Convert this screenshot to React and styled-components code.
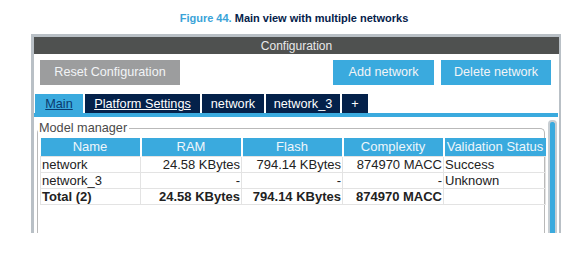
import styled, { createGlobalStyle } from "styled-components";

const GlobalStyle = createGlobalStyle`
  html, body {
    margin: 0;
    padding: 0;
    background: #ffffff;
  }
  body {
    font-family: "Liberation Sans", Arial, sans-serif;
  }
`;

const Page = styled.div`
  width: 588px;
  height: 274px;
  padding-top: 11px;
  box-sizing: border-box;
  overflow: hidden;
`;

const Caption = styled.div`
  text-align: center;
  font-size: 11px;
  font-weight: 700;
  line-height: 14px;
  color: #04214a;
  margin-bottom: 9px;

  span {
    color: #3aa3d8;
  }
`;

const Frame = styled.div`
  margin-left: 31px;
  width: 530px;
  height: 199px;
  box-sizing: border-box;
  border: 3px solid #b9c0c6;
  border-right-width: 2px;
  border-bottom: none;
  display: flex;
  flex-direction: column;
`;

const Header = styled.div`
  height: 17px;
  background: #4f5150;
  color: #e9e9e9;
  font-size: 12px;
  line-height: 18px;
  text-align: center;
`;

const Body = styled.div`
  flex: 1;
  display: flex;
  flex-direction: column;
  padding-top: 6px;
  min-height: 0;
`;

const ButtonRow = styled.div`
  display: flex;
  gap: 7px;
  padding: 0 8px 0 6px;
`;

const Button = styled.div`
  height: 25px;
  width: ${({ w }) => w}px;
  margin-left: ${({ push }) => (push ? "auto" : "0")};
  background: ${({ variant }) => (variant === "grey" ? "#9c9d9e" : "#3aaade")};
  color: #f2f4f6;
  font-size: 12.6px;
  line-height: 25px;
  text-align: center;
`;

const Tabs = styled.div`
  display: flex;
  gap: 2px;
  margin-top: 9px;
  padding-left: 1px;
`;

const Tab = styled.div`
  height: 19px;
  width: ${({ w }) => w}px;
  background: ${({ active }) => (active ? "#3aaade" : "#04214a")};
  color: ${({ active }) => (active ? "#0a3a6e" : "#ffffff")};
  font-size: 12.7px;
  line-height: 20px;
  text-align: center;
  text-decoration: ${({ underline }) => (underline ? "underline" : "none")};
`;

const TabLine = styled.div`
  height: 4px;
  background: #3aaade;
  margin-right: 1px;
`;

const Content = styled.div`
  flex: 1;
  display: flex;
  gap: 3px;
  padding: 4px 2px 0 3px;
  min-height: 0;
`;

const Fieldset = styled.fieldset`
  flex: 1;
  margin: 0;
  padding: 1px 1px 0 2px;
  border: 1px solid #b9b9b9;
  border-bottom: none;
  border-radius: 5px 5px 0 0;
  min-width: 0;

  legend {
    font-size: 12.7px;
    color: #4a4a4a;
    padding: 0 2px 0 1px;
    margin-left: -2px;
    line-height: 14px;
  }
`;

const Table = styled.table`
  border-collapse: collapse;
  width: 505px;
  font-size: 13px;
  color: #222;
  table-layout: fixed;
  margin-top: 2px;

  th {
    background: #3aaade;
    color: #eef6fb;
    font-weight: 400;
    height: 17px;
    padding: 0;
    border-right: 2px solid #ffffff;
    line-height: 18px;
    white-space: nowrap;
    overflow: hidden;
  }
  th:last-child {
    border-right: none;
  }
  td {
    height: 15px;
    line-height: 15px;
    padding: 0 1px;
    border: 1px solid #e3e3e3;
    white-space: nowrap;
    overflow: hidden;
  }
`;

const Cell = styled.td`
  text-align: ${({ left }) => (left ? "left" : "right")};
  font-weight: ${({ bold }) => (bold ? 700 : 400)};
`;

const Scrollbar = styled.div`
  width: 5px;
  margin-top: -1px;
  border: 2px solid #c7ced3;
  border-bottom: none;
  border-radius: 4px 4px 0 0;
  background: #3aaade;
`;

const rows = [
  ["network", "24.58 KBytes", "794.14 KBytes", "874970 MACC", "Success"],
  ["network_3", "-", "-", "-", "Unknown"],
];

export default function App() {
  return (
    <Page>
      <GlobalStyle />
      <Caption>
        <span>Figure 44.</span> Main view with multiple networks
      </Caption>
      <Frame>
        <Header>Configuration</Header>
        <Body>
          <ButtonRow>
            <Button variant="grey" w={140}>
              Reset Configuration
            </Button>
            <Button w={101} push>
              Add network
            </Button>
            <Button w={110}>Delete network</Button>
          </ButtonRow>
          <Tabs>
            <Tab active underline w={48}>
              Main
            </Tab>
            <Tab underline w={115}>
              Platform Settings
            </Tab>
            <Tab w={62}>network</Tab>
            <Tab w={74}>network_3</Tab>
            <Tab w={26}>+</Tab>
          </Tabs>
          <TabLine />
          <Content>
            <Fieldset>
              <legend>Model manager</legend>
              <Table>
                <colgroup>
                  <col style={{ width: 100 }} />
                  <col style={{ width: 101 }} />
                  <col style={{ width: 101 }} />
                  <col style={{ width: 101 }} />
                  <col style={{ width: 102 }} />
                </colgroup>
                <thead>
                  <tr>
                    <th>Name</th>
                    <th>RAM</th>
                    <th>Flash</th>
                    <th>Complexity</th>
                    <th>Validation Status</th>
                  </tr>
                </thead>
                <tbody>
                  {rows.map((r) => (
                    <tr key={r[0]}>
                      <Cell left>{r[0]}</Cell>
                      <Cell>{r[1]}</Cell>
                      <Cell>{r[2]}</Cell>
                      <Cell>{r[3]}</Cell>
                      <Cell left>{r[4]}</Cell>
                    </tr>
                  ))}
                  <tr>
                    <Cell left bold>
                      Total (2)
                    </Cell>
                    <Cell bold>24.58 KBytes</Cell>
                    <Cell bold>794.14 KBytes</Cell>
                    <Cell bold>874970 MACC</Cell>
                    <Cell left />
                  </tr>
                </tbody>
              </Table>
            </Fieldset>
            <Scrollbar />
          </Content>
        </Body>
      </Frame>
    </Page>
  );
}
